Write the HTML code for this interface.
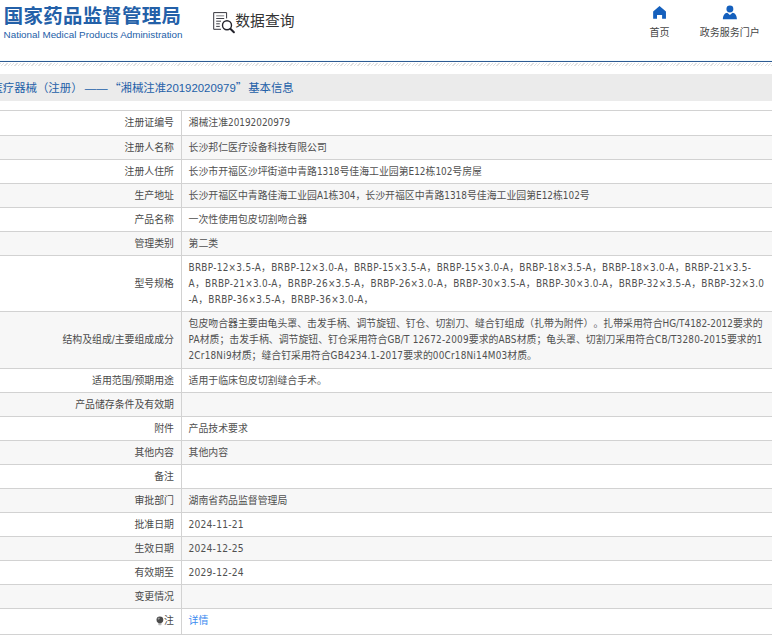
<!DOCTYPE html>
<html lang="zh-CN">
<head>
<meta charset="utf-8">
<title>国家药品监督管理局 数据查询</title>
<style>
html,body{margin:0;padding:0;background:#fff;}
body{width:772px;height:637px;overflow:hidden;position:relative;font-family:"Liberation Sans","Noto Sans CJK SC",sans-serif;color:#333;}
.abs{position:absolute;white-space:nowrap;}
#logo-cn{left:3.800px;top:1.300px;font-size:19.4px;letter-spacing:0.320px;line-height:30px;font-weight:bold;color:#2360a8;}
#logo-en{left:3.600px;top:28px;font-size:9.86px;line-height:14px;color:#2360a8;}
#dq-text{left:235.300px;top:9.500px;font-size:14.8px;line-height:22px;color:#333;}
#dq-icon{left:205px;top:5px;}
.nav{font-size:10px;line-height:14px;color:#444;text-align:center;}
#nav1{left:639.500px;top:25.600px;width:40px;}
#nav2{left:689.700px;top:25.600px;width:80px;}
#line{left:0;top:61px;width:772px;height:1px;background:#2d5a92;box-shadow:0 -1px 0 #f3fbfe;}
#hatch{left:0;top:63px;width:772px;height:3px;background:repeating-linear-gradient(135deg,#e0e0e0 0,#e0e0e0 0.900px,#fff 0.900px,#fff 2.400px);}
#bar{left:0;top:74px;width:772px;height:27px;background:#ebebeb;}
#title{left:-8.6px;top:74.200px;font-size:11.4px;line-height:27px;color:#2360a8;}
#title .q{font-family:"Noto Sans CJK SC",sans-serif;}
table{position:absolute;left:-20px;top:110px;width:812px;border-collapse:collapse;font-family:"DejaVu Sans Condensed","Liberation Sans","Noto Sans CJK SC",sans-serif;font-size:9.9px;line-height:16px;color:#505050;table-layout:fixed;text-spacing-trim:space-all;}
tr{height:24px;}
tr.h25{height:25px;}
tr.last{height:25.6px;}
td{border:1px solid #d2d2d2;padding:0 8px;vertical-align:middle;white-space:nowrap;}
td.k{width:185px;text-align:right;padding-right:6.500px;color:#4a4a4a;}
td.v{text-align:left;padding-left:7px;}
tr.m3{height:56px;}
tr.m3b{height:57px;}
tr:nth-child(even) td{background:#f7f7f7;}
td.d{font-size:10.2px;letter-spacing:0.200px;}
td .l{letter-spacing:0.210px;}
.bulb{display:inline-block;vertical-align:middle;margin:-1px 0.400px 0 0;}
a{color:#3a8af0;text-decoration:none;}
</style>
</head>
<body>
<div class="abs" id="logo-cn">国家药品监督管理局</div>
<div class="abs" id="logo-en">National Medical Products Administration</div>
<svg class="abs" id="dq-icon" width="40" height="35" viewBox="205 5 40 35"><path d="M213.700 29.300V12.600H226.600V18.400M213.700 29.300H221" fill="none" stroke="#2b2b33" stroke-width="0.950"/><path d="M216.200 15.800H224.200" stroke="#9a9a9e" stroke-width="1.300"/><path d="M216.200 18.500H224.200M216.200 21.200H221M216.200 23.800H219.800M216.200 26.400H219.800" stroke="#2b2b33" stroke-width="0.900"/><circle cx="227" cy="25.300" r="4.500" fill="#fff" stroke="#23232b" stroke-width="1.400"/><path d="M230.600 29L233.900 32.300" stroke="#23232b" stroke-width="2" stroke-linecap="round"/></svg>
<div class="abs" id="dq-text">数据查询</div>
<svg class="abs" style="left:640px;top:0px" width="40" height="40" viewBox="640 0 40 40"><path d="M659.550 6.100L653.150 11.600V18.750H657V15.100H662.100V18.750H665.950V11.600Z" fill="#1560bd"/></svg>
<svg class="abs" style="left:715px;top:0px" width="30" height="30" viewBox="715 0 30 30"><circle cx="729.900" cy="9.050" r="3.450" fill="#1560bd"/><path d="M722.900 19.300C722.900 15.500 724.600 12.900 727.300 12.700L729.900 15 732.500 12.700C735.200 12.900 736.900 15.500 736.900 19.300Z" fill="#1560bd"/></svg>
<div class="abs nav" id="nav1">首页</div>
<div class="abs nav" id="nav2">政务服务门户</div>
<div class="abs" id="line"></div>
<div class="abs" id="hatch"></div>
<div class="abs" id="bar"></div>
<div class="abs" id="title">医疗器械（注册）<span style="margin-left:2.3px">——</span><span class="q" style="margin-left:1.500px">“</span>湘械注准20192020979<span class="q" style="margin-right:1px">”</span>基本信息</div>
<table>
<tr class="h25"><td class="k">注册证编号</td><td class="v">湘械注准20192020979</td></tr>
<tr><td class="k">注册人名称</td><td class="v">长沙邦仁医疗设备科技有限公司</td></tr>
<tr><td class="k">注册人住所</td><td class="v">长沙市开福区沙坪街道中青路1318号佳海工业园第E12栋102号房屋</td></tr>
<tr><td class="k">生产地址</td><td class="v">长沙开福区中青路佳海工业园A1栋304，长沙开福区中青路1318号佳海工业园第E12栋102号</td></tr>
<tr><td class="k">产品名称</td><td class="v">一次性使用包皮切割吻合器</td></tr>
<tr><td class="k">管理类别</td><td class="v">第二类</td></tr>
<tr class="m3"><td class="k">型号规格</td><td class="v" style="letter-spacing:0.300px">BRBP-12×3.5-A，BRBP-12×3.0-A，BRBP-15×3.5-A，BRBP-15×3.0-A，BRBP-18×3.5-A，BRBP-18×3.0-A，BRBP-21×3.5-<br>A，BRBP-21×3.0-A，BRBP-26×3.5-A，BRBP-26×3.0-A，BRBP-30×3.5-A，BRBP-30×3.0-A，BRBP-32×3.5-A，BRBP-32×3.0<br>-A，BRBP-36×3.5-A，BRBP-36×3.0-A，</td></tr>
<tr class="m3b"><td class="k">结构及组成/主要组成成分</td><td class="v">包皮吻合器主要由龟头罩、击发手柄、调节旋钮、钉仓、切割刀、缝合钉组成（扎带为附件）。扎带采用符合HG/T4182-2012要求的<br><span class="l">PA</span>材质；击发手柄、调节旋钮、钉仓采用符合<span class="l">GB/T 12672-2009</span>要求的<span class="l">ABS</span>材质；龟头罩、切割刀采用符合<span class="l">CB/T3280-2015</span>要求的<span class="l">1</span><br><span class="l">2Cr18Ni9</span>材质；缝合钉采用符合<span class="l">GB4234.1-2017</span>要求的<span class="l">00Cr18Ni14M03</span>材质。</td></tr>
<tr><td class="k">适用范围/预期用途</td><td class="v">适用于临床包皮切割缝合手术。</td></tr>
<tr><td class="k">产品储存条件及有效期</td><td class="v"></td></tr>
<tr><td class="k">附件</td><td class="v">产品技术要求</td></tr>
<tr><td class="k">其他内容</td><td class="v">其他内容</td></tr>
<tr><td class="k">备注</td><td class="v"></td></tr>
<tr><td class="k">审批部门</td><td class="v">湖南省药品监督管理局</td></tr>
<tr><td class="k">批准日期</td><td class="v d">2024-11-21</td></tr>
<tr><td class="k">生效日期</td><td class="v d">2024-12-25</td></tr>
<tr><td class="k">有效期至</td><td class="v d">2029-12-24</td></tr>
<tr><td class="k">变更情况</td><td class="v"></td></tr>
<tr class="last"><td class="k"><svg class="bulb" width="8" height="10" viewBox="0 0 8 10"><rect x="2.300" y="6.800" width="3.200" height="2.400" rx="0.600" fill="#b9b9b9"/><circle cx="3.900" cy="3.800" r="3.400" fill="#4b4b4b"/><ellipse cx="2.700" cy="2.600" rx="1.200" ry="0.900" fill="#9a9a9a" transform="rotate(-35 2.700 2.600)"/></svg>注</td><td class="v"><a>详情</a></td></tr>
</table>
</body>
</html>
